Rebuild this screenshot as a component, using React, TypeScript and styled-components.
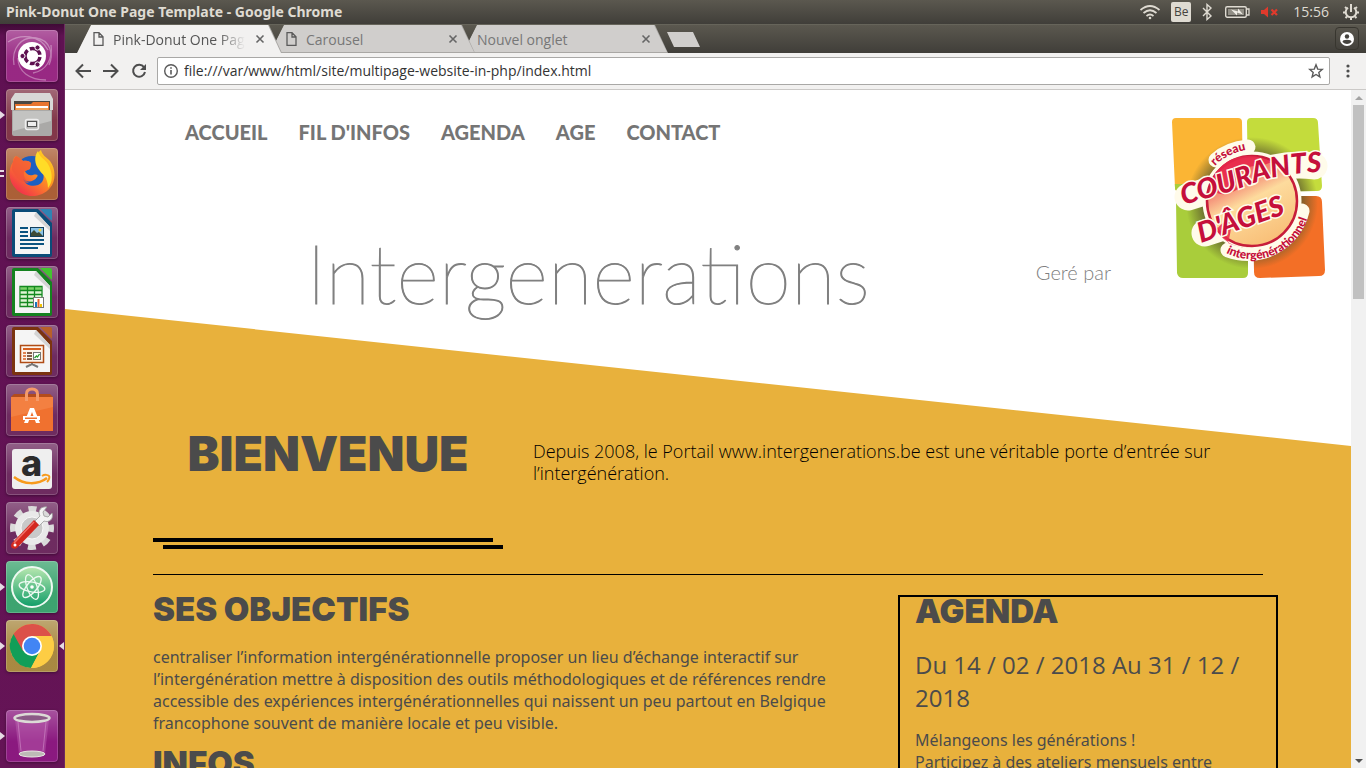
import React from "react";
import styled, { createGlobalStyle, css } from "styled-components";

const UI_FONT = `"Open Sans", "Noto Sans", sans-serif`;
const WIDE_FONT = `"Noto Sans", "Open Sans", sans-serif`;

const GlobalStyle = createGlobalStyle`
  * { box-sizing: border-box; }
  html, body, #root { height: 100%; }
  body { margin: 0; overflow: hidden; font-family: ${UI_FONT}; }
  button { border: 0; padding: 0; background: none; font: inherit; color: inherit; display: block; }
  svg { display: block; }
  h1, h2, h3, p, ul { margin: 0; padding: 0; }
`;

/* ---------- Desktop shell ---------- */

const Desktop = styled.div`
  height: 100vh;
  display: flex;
  flex-direction: column;
`;

const TopPanel = styled.header`
  flex: none;
  height: 24px;
  display: flex;
  align-items: center;
  justify-content: space-between;
  padding: 0 7px 0 6px;
  background: linear-gradient(#5b584f, #403e39);
  color: #dfdbd2;
  font-size: 14px;
  line-height: 24px;
`;

const WindowTitle = styled.strong`
  font-family: ${WIDE_FONT};
  font-weight: 700;
`;

const Indicators = styled.div`
  display: flex;
  align-items: center;
  gap: 10px;
`;

const KeyboardLayout = styled.button`
  && {
    width: 20px;
    height: 20px;
    border-radius: 2px;
    background: #dfdbd2;
    color: #45433e;
    font-size: 12px;
    line-height: 20px;
  }
`;

const Clock = styled.time`
  margin: 0 4px;
`;

const Workspace = styled.div`
  flex: 1;
  min-height: 0;
  display: flex;
`;

const Launcher = styled.nav`
  flex: none;
  width: 65px;
  display: flex;
  flex-direction: column;
  gap: 7px;
  padding: 6px 6px 6px;
  background: linear-gradient(#3f0a36, #5f1152 12px, #651456);
  border-right: 1px solid #6d2a60;
`;

const LauncherItem = styled.button<{ $tint: string; $last?: boolean }>`
  && {
    position: relative;
    flex: none;
    width: 52px;
    height: 52px;
    border-radius: 4px;
    background: linear-gradient(rgba(255, 255, 255, 0.28), rgba(255, 255, 255, 0.04) 60%), ${(p) => p.$tint};
    box-shadow: inset 0 0 0 1px rgba(255, 255, 255, 0.18), 0 1px 3px rgba(0, 0, 0, 0.35);
    ${(p) => p.$last && css`margin-top: auto;`}
  }
`;

const Pip = styled.span<{ $side: "left" | "right" }>`
  position: absolute;
  top: 22px;
  ${(p) => p.$side}: -6px;
  border: 4px solid transparent;
  ${(p) =>
    p.$side === "left"
      ? css`border-left: 5px solid #e6dbe4; border-right: 0;`
      : css`border-right: 5px solid #e6dbe4; border-left: 0;`}
`;

const DoublePip = styled.span`
  position: absolute;
  top: 22px;
  left: -6px;
  width: 4px;
  height: 7px;
  border: solid #e6dbe4;
  border-width: 2px 0;
`;

const Browser = styled.div`
  flex: 1;
  min-width: 0;
  display: flex;
  flex-direction: column;
`;

const TabStrip = styled.div`
  flex: none;
  height: 29px;
  display: flex;
  align-items: flex-end;
  padding: 0 7px 0 12px;
  border-top: 1px solid #66645a;
  background: linear-gradient(#5b584f, #403e39);
`;

const Tab = styled.div<{ $active?: boolean; $order: number }>`
  position: relative;
  z-index: ${(p) => p.$order};
  flex: none;
  width: 205px;
  height: 28px;
  margin-right: -12px;
  padding: 0 17px 0 14px;
  display: flex;
  align-items: center;
  gap: 7px;
  font-size: 14px;
  color: ${(p) => (p.$active ? "#555" : "#777")};
  clip-path: polygon(14px 0, 192px 0, 100% 100%, 0 100%);
  background: #a9a7a4;

  &::before {
    content: "";
    position: absolute;
    z-index: -1;
    inset: 0 1px ${(p) => (p.$active ? 0 : 1)}px 0;
    clip-path: polygon(14px 0, 191px 0, 100% 100%, 0 100%);
    background: ${(p) => (p.$active ? "#f2f1f0" : "#d0cecc")};
  }
`;

const TabTitle = styled.span<{ $fade?: boolean }>`
  flex: 1;
  min-width: 0;
  overflow: hidden;
  white-space: nowrap;
  ${(p) => p.$fade && css`mask-image: linear-gradient(90deg, #000 78%, transparent 98%);`}
`;

const NewTab = styled.button`
  && {
    width: 33px;
    height: 15px;
    margin: 0 auto 6px 11px;
    background: #d0cecc;
    clip-path: polygon(0 0, 26px 0, 100% 100%, 7px 100%);
  }
`;

const ProfileButton = styled.button`
  && {
    width: 24px;
    height: 23px;
    margin-bottom: 3px;
    display: grid;
    place-items: center;
    border: 1px solid #38362f;
    border-radius: 4px;
  }
`;

const Toolbar = styled.div`
  flex: none;
  height: 37px;
  display: flex;
  align-items: center;
  gap: 8px;
  padding: 0 8px 0 8px;
  background: #f2f1f0;
  border-bottom: 1px solid #cbc9c7;
`;

const ToolButton = styled.button`
  && {
    flex: none;
    width: 20px;
    height: 20px;
    display: grid;
    place-items: center;
  }
`;

const AddressBar = styled.label`
  flex: 1;
  height: 28px;
  display: flex;
  align-items: center;
  gap: 5px;
  padding: 0 5px;
  border: 1px solid #a9a8a6;
  border-radius: 2px;
  background: #fff;
`;

const AddressInput = styled.input`
  flex: 1;
  min-width: 0;
  border: 0;
  padding: 0;
  outline: 0;
  background: none;
  color: #333;
  font: 14px/20px ${UI_FONT};
`;

const Viewport = styled.div`
  flex: 1;
  min-height: 0;
  display: flex;
`;

const Scrollbar = styled.div`
  flex: none;
  width: 15px;
  display: flex;
  flex-direction: column;
  align-items: center;
  background: #f1f1f1;
`;

const ScrollArrow = styled.button`
  && {
    width: 15px;
    height: 15px;
    display: grid;
    place-items: center;
  }
`;

const ScrollTrack = styled.div`
  flex: 1;
`;

const ScrollThumb = styled.div`
  width: 11px;
  height: 30%;
  background: #c1c1c1;
`;

/* ---------- Web page ---------- */

const Page = styled.div`
  flex: 1;
  min-width: 0;
  overflow: hidden;
  background: #fff;
`;

const Masthead = styled.header`
  display: flex;
  align-items: flex-start;
  height: 219px;
  color: #808080;
`;

const MastheadMain = styled.div`
  flex: 1;
`;

const MainNav = styled.nav`
  display: flex;
  gap: 31px;
  padding: 28px 0 0 120px;
`;

const NavLink = styled.a`
  color: #757575;
  font: 900 20px/28px Lato, sans-serif;
  text-decoration: none;
  text-transform: uppercase;
`;

const TitleRow = styled.div`
  display: grid;
  grid-template-columns: 1fr auto 1fr;
  align-items: center;
  margin-top: 76px;
  font-family: Lato, sans-serif;
`;

const SiteTitle = styled.h1`
  grid-column: 2;
  font-size: 82px;
  line-height: 100px;
  font-weight: 100;
  -webkit-text-stroke: 1px #808080;
`;

const ManagedBy = styled.span`
  justify-self: end;
  font-size: 20px;
  line-height: 24px;
  font-weight: 300;
`;

const LogoBox = styled.a`
  flex: none;
  width: 240px;
  padding: 26px 0 0 59px;
`;

const Content = styled.main`
  background: #e8b13c;
  clip-path: polygon(0 0, 100% 137px, 100% 100%, 0 100%);
  color: #4b4b4b;
  padding-top: 117px;
`;

const Container = styled.div`
  max-width: 1140px;
  margin: 0 auto;
  padding: 0 15px;
`;

const Intro = styled.section`
  display: grid;
  grid-template-columns: 1fr 2fr;
  margin: 0 -15px;
`;

const IntroHead = styled.div`
  padding: 0 15px;
`;

const Welcome = styled.h2`
  font: 900 48px/56px Inter, Lato, sans-serif;
  text-align: center;
  text-transform: uppercase;
`;

const Rules = styled.div`
  display: flex;
  flex-direction: column;
  gap: 3px;
  margin-top: 56px;
`;

const Rule = styled.span<{ $shifted?: boolean }>`
  width: calc(100% - 10px);
  height: 4px;
  background: #000;
  ${(p) => p.$shifted && css`align-self: flex-end;`}
`;

const IntroText = styled.p`
  padding: 14px 15px 0;
  color: #000;
  font-size: 18px;
  line-height: 22px;
  font-weight: 300;
`;

const Divider = styled.hr`
  height: 1px;
  margin: 25px 0 20px;
  border: 0;
  background: #000;
`;

const Columns = styled.div`
  display: grid;
  grid-template-columns: 2fr 1fr;
  margin: 0 -15px;
`;

const Column = styled.section`
  padding: 0 15px;
`;

const AgendaColumn = styled.aside`
  padding: 0 15px;
  border: 2px solid #000;
`;

const Heading = styled.h2`
  margin-bottom: 23px;
  font: 900 33px/28px Inter, Lato, sans-serif;
  text-transform: uppercase;
`;

const DateRange = styled.h3`
  margin-bottom: 15px;
  font-size: 24px;
  line-height: 33px;
  font-weight: 400;
`;

const Paragraph = styled.p`
  margin-bottom: 15px;
  font-family: ${WIDE_FONT};
  font-size: 16px;
  line-height: 22px;
`;

/* ---------- Launcher drawings ---------- */

const Icon = ({ children }: { children: React.ReactNode }) => (
  <svg width="52" height="52" viewBox="0 0 52 52" aria-hidden="true">{children}</svg>
);

const DashIcon = () => (
  <Icon>
    <g fill="none" stroke="#fff" strokeWidth="1.300" opacity=".35">
      <path d="M8 35C5 18 16 6 30 8s18 16 13 27" />
      <path d="M2 12c12-8 32-8 40 8M12 28c0 14 12 22 28 22M45 15c2 14-5 26-18 28" />
    </g>
    <circle cx="26" cy="26" r="14" fill="#fff" />
    <circle cx="26.500" cy="26" r="7.500" fill="none" stroke="#5e1150" strokeWidth="3.500" strokeDasharray="13.200 2.500" strokeDashoffset="-1" />
    <g fill="#5e1150" stroke="#fff" strokeWidth="1">
      <circle cx="16.500" cy="26" r="2.600" />
      <circle cx="31.500" cy="17.500" r="2.600" />
      <circle cx="31.500" cy="34.500" r="2.600" />
    </g>
  </Icon>
);

const FilesIcon = () => (
  <Icon>
    <path d="M9 4h35l3 6v11H5V10z" fill="#d8d8d6" />
    <path d="M8 12h36v10H8z" fill="#4b4741" />
    <path d="M9 15h16l2-2h16v9H9z" fill="#e8752f" />
    <path d="M10 17h32v3H10z" fill="#fff" />
    <path d="M10 19h32v3H10z" fill="#f0a35a" />
    <path d="M6 21h40v24a2 2 0 0 1-2 2H8a2 2 0 0 1-2-2z" fill="#aaa9a7" />
    <path d="M7 22h38v10L7 42z" fill="#c3c3c1" />
    <rect x="19.500" y="30.500" width="13" height="10" rx="2" fill="#b5b5b3" stroke="#eee" strokeWidth="1.500" />
    <rect x="21.500" y="32.500" width="9" height="5" fill="#eee" stroke="#555" strokeWidth="1" />
  </Icon>
);

const FirefoxIcon = () => (
  <Icon>
    <defs>
      <linearGradient id="ff" x1="1" y1="0" x2=".2" y2="1">
        <stop offset="0" stopColor="#ffe226" /><stop offset=".45" stopColor="#ff9a1f" /><stop offset="1" stopColor="#f0284e" />
      </linearGradient>
    </defs>
    <circle cx="26" cy="26" r="18" fill="#1b5fc1" />
    <path d="M10 8c3 1 5 3 7 5 5-1 8 1 8 3l-1 5-5 2c1 3 4 5 8 4 3-1 6 0 4 2-3 5-10 6-14 2 3 8 14 9 19 3 4-6 0-13-4-17-5-8 0-13 3-15 1 5 5 7 9 11 6 8 6 20 0 27-8 10-25 11-34 1C2 33 2 21 7 14c0-3 1-5 3-6z" fill="url(#ff)" />
    <path d="M32 3c1 6 7 8 10 13 5 9 5 18 0 24 0-11-6-14-8-17-6-7-6-15-2-20z" fill="#ffdc27" />
    <path d="M10 8c3 1 5 3 7 5 5-1 8 1 8 3l-1 5-5 2c-3 3 0 9 4 12-9 0-14-7-17-13 0-6 1-11 4-14z" fill="#f2543a" opacity=".75" />
  </Icon>
);

const Sheet = ({ color, light, children }: { color: string; light: string; children: React.ReactNode }) => (
  <Icon>
    <path d="M8 2h24l14 14v32a2 2 0 0 1-2 2H8a2 2 0 0 1-2-2V4a2 2 0 0 1 2-2z" fill={color} />
    <path d="M34 2h10a2 2 0 0 1 2 2v10z" fill={light} />
    <path d="M9 5h21l14 15v27H9z" fill="#f5f5f5" />
    <path d="M30 5l14 15v4L28 9z" fill="#d4d4d4" />
    {children}
  </Icon>
);

const WriterIcon = () => (
  <Sheet color="#0b4c78" light="#2f83b3">
    <path d="M14 21h8M14 25h8M14 29h8M14 33h24M14 37h24M14 41h18" stroke="#0b5380" strokeWidth="2" />
    <rect x="24.500" y="20.500" width="13" height="9" fill="#8ac3e8" stroke="#13405e" />
    <path d="M25 29v-3l3-3 3 3 2-1 4 4z" fill="#3d4a35" />
    <circle cx="34" cy="23" r="1.500" fill="#f5d33b" />
  </Sheet>
);

const CalcIcon = () => (
  <Sheet color="#15821f" light="#43c330">
    <path d="M15 20h20v20H15z" fill="#dff5d5" />
    <path d="M15 20h20v4H15z" fill="#7bd268" />
    <path d="M14 20.500h22v20H14zM14 24.500h22M14 28.500h22M14 32.500h22M14 36.500h22M21.500 20v20M28.500 20v20" fill="none" stroke="#14891f" strokeWidth="1.300" />
    <rect x="27.500" y="31.500" width="10" height="10" fill="#fff" stroke="#777" />
    <path d="M29 36h2v5h-2z" fill="#1b75bc" /><path d="M31.500 33h2v8h-2z" fill="#e8622b" /><path d="M34 38h2v3h-2z" fill="#f2c200" />
  </Sheet>
);

const ImpressIcon = () => (
  <Sheet color="#7b3410" light="#b86029">
    <rect x="14.500" y="20.500" width="23" height="17" fill="#fdf3ea" stroke="#b04c16" strokeWidth="1.500" />
    <path d="M17 24h18" stroke="#d65f20" strokeWidth="2" />
    <path d="M17 28h3M17 31h3M17 34h3" stroke="#d65f20" strokeWidth="1.500" />
    <path d="M21 28h5M21 31h5M21 34h5" stroke="#5a2a12" strokeWidth="1.500" />
    <rect x="27.500" y="27.500" width="7" height="7" fill="#fff" stroke="#777" />
    <path d="M28.500 33l2-2 1 1 2-3" fill="none" stroke="#2a9a2e" strokeWidth="1.300" />
    <path d="M26 38v2M20 42l6-3 6 3" fill="none" stroke="#777" strokeWidth="2" />
  </Sheet>
);

const SoftwareIcon = () => (
  <Icon>
    <path d="M5 13l3-3h36l3 3z" fill="#b34c1c" />
    <path d="M5 13h42v34H5z" fill="#f0712f" />
    <path d="M5 13h42v10L5 33z" fill="#f58b4e" opacity=".6" />
    <path d="M20.500 17V10q0-5 5.500-5t5.500 5v7" fill="none" stroke="#f49a6a" strokeWidth="3" />
    <path d="M18 39l6-15h4l6 15h-4l-4-11-4 11z" fill="#fff" />
    <path d="M17 32h17v4H17z" fill="#fff" />
    <path d="M19 33.500h12v1.500H19z" fill="#f0712f" />
  </Icon>
);

const AmazonIcon = () => (
  <Icon>
    <rect x="6" y="6" width="40" height="40" rx="3" fill="#efefef" />
    <text x="15" y="33" fontFamily="Inter, sans-serif" fontWeight="800" fontSize="36" fill="#2c2c2c">a</text>
    <path d="M8 34c10 8 24 8 33 1" fill="none" stroke="#f79a1c" strokeWidth="2.500" />
    <path d="M36 33c3-2 6-1 7 0s0 4-2 6" fill="none" stroke="#f79a1c" strokeWidth="2" />
  </Icon>
);

const SettingsIcon = () => (
  <Icon>
    <circle cx="26" cy="26" r="19" fill="none" stroke="#dadada" strokeWidth="6" strokeDasharray="8 6.900" strokeDashoffset="4" />
    <circle cx="26" cy="26" r="17" fill="#e9e9e9" />
    <circle cx="26" cy="26" r="11" fill="#c9c9c9" stroke="#f8f8f8" strokeWidth="1" />
    <path d="M29 19l5-5c-3-5 1-10 7-9l-4 5 1 4 4 1 4-4c2 6-3 10-8 8l-5 5z" fill="#f3f3f3" stroke="#999" strokeWidth=".8" />
    <path d="M6 41l22-23 5 5-22 23c-4 2-8-1-5-5z" fill="#d4281f" />
    <path d="M8 41l20-21" stroke="#ef7069" strokeWidth="1.500" />
    <circle cx="9" cy="43" r="1.500" fill="#fff" />
  </Icon>
);

const AtomIcon = () => (
  <Icon>
    <defs>
      <linearGradient id="atom" x1="0" y1="0" x2="0" y2="1">
        <stop offset="0" stopColor="#b9e8b0" /><stop offset="1" stopColor="#0f9d68" />
      </linearGradient>
    </defs>
    <circle cx="26" cy="26" r="20" fill="url(#atom)" stroke="#eefaf2" strokeWidth="2" />
    <g fill="none" stroke="#eefaf2" strokeWidth="1.300">
      <ellipse cx="26" cy="26" rx="13" ry="5" transform="rotate(10 26 26)" />
      <ellipse cx="26" cy="26" rx="13" ry="5" transform="rotate(70 26 26)" />
      <ellipse cx="26" cy="26" rx="13" ry="5" transform="rotate(-50 26 26)" />
    </g>
    <circle cx="26" cy="26" r="1.800" fill="#fff" />
  </Icon>
);

const ChromeIcon = () => (
  <Icon>
    <circle cx="26" cy="26" r="22" fill="#fcc93c" />
    <path d="M26 26L7.500 14A22 22 0 0 0 25 48l9.500-18z" fill="#119e58" />
    <path d="M26 16h19.500A22 22 0 0 1 25 48l9.500-18z" fill="#fdcd44" />
    <path d="M7.500 14L17 31l9-5 0-10h19.500A22 22 0 0 0 7.500 14z" fill="#dc5149" />
    <circle cx="26" cy="26" r="10" fill="#fff" />
    <circle cx="26" cy="26" r="8.300" fill="#4285f4" />
  </Icon>
);

const TrashIcon = () => (
  <Icon>
    <path d="M9 9h34l-4 35q-13 5-26 0z" fill="#c66cba" opacity=".4" />
    <path d="M12 12l3 29M40 12l-3 29" stroke="#d9a0d2" strokeWidth="1" opacity=".5" />
    <ellipse cx="26" cy="44" rx="13" ry="3" fill="#bdbab6" stroke="#e9e7e4" strokeWidth="1" />
    <ellipse cx="26" cy="8" rx="17.500" ry="4" fill="#8b5a86" stroke="#dcdad6" strokeWidth="2.500" />
  </Icon>
);

const launcherItems: { name: string; tint: string; icon: React.ReactNode; open?: "one" | "two" | "focus"; last?: boolean }[] = [
  { name: "Tableau de bord", tint: "#94207e", icon: <DashIcon /> },
  { name: "Fichiers", tint: "#7d2f42", icon: <FilesIcon />, open: "one" },
  { name: "Firefox", tint: "#a8592f", icon: <FirefoxIcon />, open: "two" },
  { name: "Writer", tint: "#68235a", icon: <WriterIcon /> },
  { name: "Calc", tint: "#68235a", icon: <CalcIcon /> },
  { name: "Impress", tint: "#68235a", icon: <ImpressIcon /> },
  { name: "Logithèque", tint: "#68235a", icon: <SoftwareIcon /> },
  { name: "Amazon", tint: "#68235a", icon: <AmazonIcon /> },
  { name: "Paramètres", tint: "#68235a", icon: <SettingsIcon /> },
  { name: "Atom", tint: "#35a06a", icon: <AtomIcon />, open: "one" },
  { name: "Chrome", tint: "#a5843a", icon: <ChromeIcon />, open: "focus" },
  { name: "Corbeille", tint: "#86107a", icon: <TrashIcon />, open: "one", last: true },
];

/* ---------- Browser and panel glyphs ---------- */

const FileGlyph = () => (
  <svg width="15" height="16" viewBox="0 0 15 16" fill="none" stroke="#5a5a5a" strokeWidth="1.300">
    <path d="M3 1.700h5l4 4v8.600H3zM8 2v4h4" />
  </svg>
);

const CloseGlyph = () => (
  <svg width="10" height="10" viewBox="0 0 10 10" stroke="#666" strokeWidth="1.600"><path d="M1.500 1.500l7 7M8.500 1.500l-7 7" /></svg>
);

const tool = { width: 18, height: 18, viewBox: "0 0 18 18", fill: "none", stroke: "#4d4d4d", strokeWidth: 2 };

const WifiGlyph = () => (
  <svg width="22" height="16" viewBox="0 0 22 16" fill="none" stroke="#dfdbd2" strokeWidth="1.700">
    <path d="M1.500 6q9.500-8 19 0M4.500 9q6.500-5.500 13 0M7.500 12q3.500-3 7 0" />
    <circle cx="11" cy="14" r="1.300" fill="#dfdbd2" stroke="none" />
  </svg>
);

const BluetoothGlyph = () => (
  <svg width="14" height="18" viewBox="0 0 14 18" fill="none" stroke="#dfdbd2" strokeWidth="1.400">
    <path d="M2 5l8 8-4 3.500v-15L10 5l-8 8" />
  </svg>
);

const BatteryGlyph = () => (
  <svg width="25" height="14" viewBox="0 0 25 14">
    <rect x=".7" y="1.700" width="20.600" height="10.600" rx="1.500" fill="none" stroke="#dfdbd2" strokeWidth="1.400" />
    <path d="M3 4h16v6H3z" fill="#918e85" />
    <path d="M22 4h2v6h-2" fill="none" stroke="#dfdbd2" strokeWidth="1.300" />
    <path d="M6 4.500l7 2V3.500l5 6-6-2V10.500z" fill="#f0ede6" />
  </svg>
);

const MuteGlyph = () => (
  <svg width="19" height="12" viewBox="0 0 19 12">
    <path d="M1 4h3l4-3.500v11L4 8H1z" fill="#e03a2c" />
    <path d="M11.500 3.500l5.500 5.500M17 3.500L11.500 9" stroke="#e03a2c" strokeWidth="2.200" />
  </svg>
);

const SessionGlyph = () => (
  <svg width="16" height="16" viewBox="0 0 16 16" fill="none" stroke="#dfdbd2" strokeWidth="2">
    <path d="M5 3.700a5.300 5.300 0 1 0 6 0M8 0v8" />
    <path d="M2 3l1.800 1.500M14 3l-1.800 1.500M0 8.500h2.500M13.500 8.500H16M2.500 14l1.500-1.500M13.500 14L12 12.500M8 13.500V16" />
  </svg>
);

const Logo = () => (
  <svg width="160" height="166" viewBox="10 10 160 166" role="img" aria-label="Réseau Courants d'Âges intergénérationnel">
    <defs>
      <path id="lowerArc" d="M66 147A58 58 0 0 0 150 95" />
      <path id="upperArc" d="M55 60Q68 46 92 43" />
      <path id="nameArc" d="M23 99Q68 87 95 77T162 66" />
      <radialGradient id="glow"><stop offset=".75" stopColor="#5d5a2c" stopOpacity=".75" /><stop offset="1" stopColor="#5d5a2c" stopOpacity="0" /></radialGradient>
      <linearGradient id="ball" x1=".2" y1="0" x2=".7" y2="1">
        <stop offset="0" stopColor="#ee2b4b" /><stop offset=".3" stopColor="#f48a76" /><stop offset=".5" stopColor="#fddb9d" /><stop offset="1" stopColor="#f8bd75" />
      </linearGradient>
      <clipPath id="tiles">
        <path d="M16 12h62q4 0 4 4l1 66-65 3q-3 0-3-3L12 16q0-4 4-4zM91 12h62q5 0 5 5l4 63q0 5-5 5l-69 1-1-70q0-4 4-4zM20 90h64q4 0 4 4v73q0 5-5 5H23q-5 0-6-5l-1-73q0-4 4-4zM97 90h59q6 0 6 6l3 68q0 6-6 6l-59 2q-6 0-6-6l-1-72q0-4 4-4z" />
      </clipPath>
    </defs>
    <g clipPath="url(#tiles)">
      <path d="M10 10h75v78H10z" fill="#fbb534" />
      <path d="M85 10h85v78H85z" fill="#c4dc3c" />
      <path d="M10 78h80v98H10z" fill="#a9cd3b" />
      <path d="M90 88h80v88H90z" fill="#f36f26" />
      <circle cx="92" cy="97" r="66" fill="url(#glow)" />
    </g>
    <g stroke="#fffbea" strokeLinejoin="round" strokeLinecap="round" fill="none">
      <circle cx="92" cy="95" r="46" fill="#fffbea" strokeWidth="7" />
      <path d="M56 54Q68 43 88 41" strokeWidth="15" />
      <path d="M68 144A56 56 0 0 0 142 105" strokeWidth="15" />
      <path d="M28 91Q65 80 95 68T154 60" strokeWidth="27" />
      <path d="M45 127L122 102" strokeWidth="27" />
    </g>
    <circle cx="92" cy="95" r="45" fill="url(#ball)" stroke="#c71d3a" strokeWidth="2.500" />
    <path d="M51 78C58 52 88 43 112 56L101 60C82 57 71 76 78 83 63 93 52 87 51 78z" fill="#e8284b" opacity=".85" />
    <path d="M56 124q22-25 12 13 10 5 21 4-20 2-33-17z" fill="#e8284b" opacity=".85" />
    <g fill="#c50f3b" fontFamily="Lato, sans-serif" fontWeight="900">
      <text fontSize="28" fontStyle="italic" stroke="#fffbea" strokeWidth="3" paintOrder="stroke"><textPath href="#nameArc">COURANTS</textPath></text>
      <text fontSize="28" fontStyle="italic" stroke="#fffbea" strokeWidth="3" paintOrder="stroke" transform="translate(41 137) rotate(-19)">D'ÂGES</text>
      <text fontSize="12"><textPath href="#upperArc">réseau</textPath></text>
      <text fontSize="12"><textPath href="#lowerArc">intergénérationnel</textPath></text>
    </g>
  </svg>
);

const navItems = ["Accueil", "Fil d'infos", "Agenda", "Age", "Contact"];

export default function App() {
  return (
    <Desktop>
      <GlobalStyle />
      <TopPanel>
        <WindowTitle>Pink-Donut One Page Template - Google Chrome</WindowTitle>
        <Indicators>
          <WifiGlyph />
          <KeyboardLayout>Be</KeyboardLayout>
          <BluetoothGlyph />
          <BatteryGlyph />
          <MuteGlyph />
          <Clock>15:56</Clock>
          <SessionGlyph />
        </Indicators>
      </TopPanel>
      <Workspace>
        <Launcher aria-label="Lanceur">
          {launcherItems.map((item) => (
            <LauncherItem key={item.name} aria-label={item.name} $tint={item.tint} $last={item.last}>
              {item.icon}
              {item.open === "two" && <DoublePip />}
              {(item.open === "one" || item.open === "focus") && <Pip $side="left" />}
              {item.open === "focus" && <Pip $side="right" />}
            </LauncherItem>
          ))}
        </Launcher>
        <Browser>
          <TabStrip>
            <Tab $active $order={3}>
              <FileGlyph />
              <TabTitle $fade>Pink-Donut One Page</TabTitle>
              <button aria-label="Fermer l'onglet"><CloseGlyph /></button>
            </Tab>
            <Tab $order={2}>
              <FileGlyph />
              <TabTitle>Carousel</TabTitle>
              <button aria-label="Fermer l'onglet"><CloseGlyph /></button>
            </Tab>
            <Tab $order={1}>
              <TabTitle>Nouvel onglet</TabTitle>
              <button aria-label="Fermer l'onglet"><CloseGlyph /></button>
            </Tab>
            <NewTab aria-label="Nouvel onglet" />
            <ProfileButton aria-label="Profil">
              <svg width="14" height="14" viewBox="0 0 14 14">
                <circle cx="7" cy="7" r="7" fill="#fff" />
                <circle cx="7" cy="4.500" r="2.200" fill="#45433e" />
                <path d="M2.500 10q0-2.200 4.500-2.200T11.500 10Q9.500 12 7 12T2.500 10z" fill="#45433e" />
              </svg>
            </ProfileButton>
          </TabStrip>
          <Toolbar>
            <ToolButton aria-label="Précédent"><svg {...tool}><path d="M17 9H3M9 2.500L2.500 9 9 15.500" /></svg></ToolButton>
            <ToolButton aria-label="Suivant"><svg {...tool}><path d="M1 9h14M9 2.500L15.500 9 9 15.500" /></svg></ToolButton>
            <ToolButton aria-label="Actualiser">
              <svg {...tool}><path d="M14 5.200A6 6 0 1 0 15 10" /><path d="M16 2v6h-6z" fill="#4d4d4d" stroke="none" /></svg>
            </ToolButton>
            <AddressBar>
              <svg width="16" height="16" viewBox="0 0 16 16" fill="none" stroke="#5a5a5a" strokeWidth="1.400">
                <circle cx="8" cy="8" r="6.300" /><path d="M8 7v4.500M8 4.300v1.500" strokeWidth="1.600" />
              </svg>
              <AddressInput aria-label="Adresse" defaultValue="file:///var/www/html/site/multipage-website-in-php/index.html" />
              <svg width="16" height="16" viewBox="0 0 16 16" fill="none" stroke="#5a5a5a" strokeWidth="1.400">
                <path d="M8 1.800l1.700 4.300 4.600.3-3.500 3 1.100 4.500L8 11.500l-3.900 2.400 1.100-4.500-3.500-3 4.600-.3z" />
              </svg>
            </AddressBar>
            <ToolButton aria-label="Menu">
              <svg width="4" height="14" viewBox="0 0 4 14" fill="#4d4d4d"><circle cx="2" cy="2" r="1.600" /><circle cx="2" cy="7" r="1.600" /><circle cx="2" cy="12" r="1.600" /></svg>
            </ToolButton>
          </Toolbar>
          <Viewport>
            <Page>
              <Masthead>
                <MastheadMain>
                  <MainNav>
                    {navItems.map((item) => (
                      <NavLink key={item} href="#">{item}</NavLink>
                    ))}
                  </MainNav>
                  <TitleRow>
                    <SiteTitle>Intergenerations</SiteTitle>
                    <ManagedBy>Geré par</ManagedBy>
                  </TitleRow>
                </MastheadMain>
                <LogoBox href="#"><Logo /></LogoBox>
              </Masthead>
              <Content>
                <Container>
                  <Intro>
                    <IntroHead>
                      <Welcome>Bienvenue</Welcome>
                      <Rules><Rule /><Rule $shifted /></Rules>
                    </IntroHead>
                    <IntroText>
                      Depuis 2008, le Portail www.intergenerations.be est une véritable porte d’entrée sur l’intergénération.
                    </IntroText>
                  </Intro>
                  <Divider />
                  <Columns>
                    <Column>
                      <Heading>Ses objectifs</Heading>
                      <Paragraph>
                        centraliser l’information intergénérationnelle proposer un lieu d’échange interactif sur l’intergénération mettre à disposition des outils méthodologiques et de références rendre accessible des expériences intergénérationnelles qui naissent un peu partout en Belgique francophone souvent de manière locale et peu visible.
                      </Paragraph>
                      <Heading>Infos</Heading>
                    </Column>
                    <AgendaColumn>
                      <Heading>Agenda</Heading>
                      <DateRange>Du 14 / 02 / 2018 Au 31 / 12 / 2018</DateRange>
                      <Paragraph>
                        Mélangeons les générations !<br />
                        Participez à des ateliers mensuels entre
                      </Paragraph>
                    </AgendaColumn>
                  </Columns>
                </Container>
              </Content>
            </Page>
            <Scrollbar>
              <ScrollArrow aria-label="Défiler vers le haut"><svg width="8" height="4" viewBox="0 0 8 4" fill="#a3a3a3"><path d="M0 4l4-4 4 4z" /></svg></ScrollArrow>
              <ScrollTrack><ScrollThumb /></ScrollTrack>
              <ScrollArrow aria-label="Défiler vers le bas"><svg width="8" height="4" viewBox="0 0 8 4" fill="#505050"><path d="M0 0l4 4 4-4z" /></svg></ScrollArrow>
            </Scrollbar>
          </Viewport>
        </Browser>
      </Workspace>
    </Desktop>
  );
}
